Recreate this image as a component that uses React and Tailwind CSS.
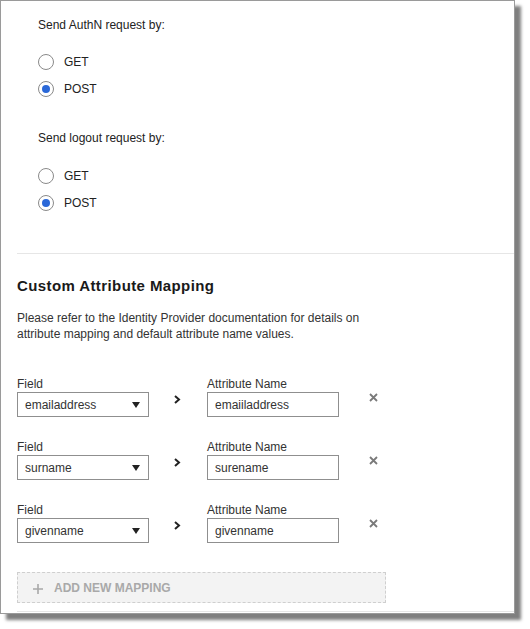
import React, { useState } from 'react';

const Radio = ({ label, checked, onClick }) => (
  <div className="flex h-[27px] items-center cursor-pointer" onClick={onClick}>
    <span className="flex h-[16px] w-[16px] items-center justify-center rounded-full border border-[#8a8a8a] bg-white">
      {checked && <span className="h-[8px] w-[8px] rounded-full bg-[#2a68d8]" />}
    </span>
    <span className="ml-[10px] text-[12px] text-[#222]">{label}</span>
  </div>
);

const MappingRow = ({ field, attr }) => (
  <div className="flex">
    <div className="flex flex-col">
      <label className="h-4 text-[12px] leading-4 text-[#333]">Field</label>
      <div className="flex h-[25px] w-[132px] items-center justify-between border border-[#8f8f8f] bg-white pl-[7px] pr-[8px]">
        <span className="text-[12px] text-[#333]">{field}</span>
        <svg width="8" height="6" viewBox="0 0 8 6">
          <path d="M0 0 H8 L4 6 Z" fill="#222" />
        </svg>
      </div>
    </div>
    <div className="ml-[25px] mt-[19px] w-[33px]">
      <svg width="7" height="9" viewBox="0 0 7 9">
        <path d="M1 1 L5 4.5 L1 8" fill="none" stroke="#222" strokeWidth="2" />
      </svg>
    </div>
    <div className="flex flex-col">
      <label className="h-4 text-[12px] leading-4 text-[#333]">Attribute Name</label>
      <input
        className="h-[25px] w-[132px] border border-[#8f8f8f] bg-white px-[7px] text-[12px] text-[#333] outline-none"
        defaultValue={attr}
      />
    </div>
    <div className="ml-[30px] mt-[17px]">
      <svg width="9" height="9" viewBox="0 0 9 9">
        <path d="M1 1 L8 8 M8 1 L1 8" stroke="#7a7a7a" strokeWidth="1.8" />
      </svg>
    </div>
  </div>
);

const App = () => {
  const [authn, setAuthn] = useState('POST');
  const [logout, setLogout] = useState('POST');

  return (
    <div className="min-h-[629px] bg-white" style={{ fontFamily: '"Liberation Sans", Arial, sans-serif' }}>
      <div className="h-[614px] w-[515px] overflow-hidden border border-[#9a9a9a] bg-white shadow-[6px_6px_3px_rgba(0,0,0,0.5)]">
        <div className="pl-[37px] pt-[16px]">
          <p className="h-4 text-[12px] leading-4 text-[#222]">Send AuthN request by:</p>
          <div className="mt-[15px]">
            <Radio label="GET" checked={authn === 'GET'} onClick={() => setAuthn('GET')} />
            <Radio label="POST" checked={authn === 'POST'} onClick={() => setAuthn('POST')} />
          </div>
          <p className="mt-[28px] h-4 text-[12px] leading-4 text-[#222]">Send logout request by:</p>
          <div className="mt-[16px]">
            <Radio label="GET" checked={logout === 'GET'} onClick={() => setLogout('GET')} />
            <Radio label="POST" checked={logout === 'POST'} onClick={() => setLogout('POST')} />
          </div>
        </div>

        <div className="ml-[16px] mt-[37px] border-t border-[#e6e6e6]" />

        <div className="pl-[16px]">
          <h2 className="mt-[22px] h-5 text-[15px] font-bold leading-5 tracking-[0.4px] text-[#1a1a1a]">
            Custom Attribute Mapping
          </h2>
          <p className="mt-[14px] w-[350px] text-[12px] leading-4 text-[#333]">
            Please refer to the Identity Provider documentation for details on attribute mapping and default attribute name values.
          </p>

          <div className="mt-[34px] flex flex-col gap-[22px]">
            <MappingRow field="emailaddress" attr="emaiiladdress" />
            <MappingRow field="surname" attr="surename" />
            <MappingRow field="givenname" attr="givenname" />
          </div>

          <button className="mt-[29px] flex h-[31px] w-[369px] items-center border border-dashed border-[#cfcfcf] bg-[#f3f3f3] pl-[15px] text-left">
            <svg width="10" height="10" viewBox="0 0 10 10" className="mt-[3px]">
              <path d="M5 0 V10 M0 5 H10" stroke="#a8a8a8" strokeWidth="1.6" />
            </svg>
            <span className="ml-[11px] text-[12px] font-bold text-[#a9a9a9]">ADD NEW MAPPING</span>
          </button>
        </div>

        <div className="ml-[16px] mt-[8px] border-t border-[#e6e6e6]" />
      </div>
    </div>
  );
};

export default App;
